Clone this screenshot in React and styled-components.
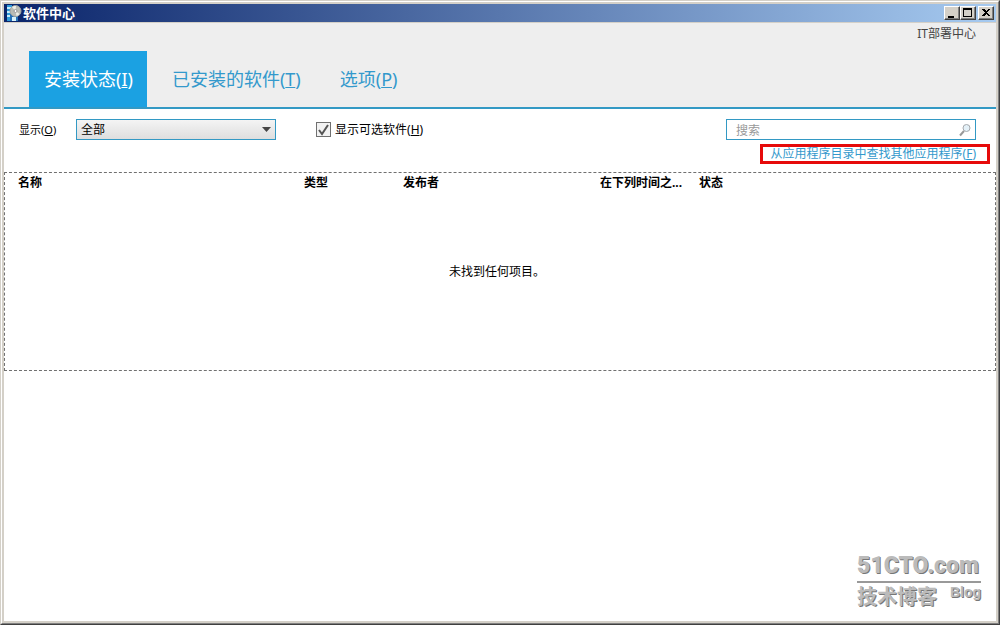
import React from "react"
import styled, { createGlobalStyle, css } from "styled-components"

const GlobalStyle = createGlobalStyle`
  * {
    box-sizing: border-box;
  }

  body {
    margin: 0;
    background: #fff;
    color: #000;
    font: 12px/16px "Noto Sans", "Noto Sans CJK SC", sans-serif;
  }

  button, input, select {
    font: inherit;
    color: inherit;
  }
`

const Frame = styled.div`
  min-height: 100vh;
  display: flex;
  flex-direction: column;
  border: 1px solid #d4d0c8;
  border-right-color: #404040;
  border-bottom-color: #404040;
`

const FrameEdge = styled.div`
  position: relative;
  flex: 1;
  display: flex;
  flex-direction: column;
  padding: 2px;
  border: 1px solid #fff;
  border-right-color: #808080;
  border-bottom-color: #808080;
  background: #fff;
  box-shadow: inset 0 0 0 2px #d4d0c8;
`

const TitleBar = styled.div`
  display: flex;
  align-items: center;
  height: 19px;
  padding: 0 2px;
  gap: 1px;
  border-bottom: 1px solid #d4d0c8;
  background: linear-gradient(to right, #0a246a, #a6caf0);
`

const Title = styled.h1`
  flex: 1;
  margin: 0;
  color: #fff;
  font-size: 13px;
  line-height: 18px;
  font-weight: 700;
`

const WindowButton = styled.button`
  display: flex;
  width: 16px;
  height: 14px;
  padding: 0;
  margin-left: ${props => (props.$spaced ? "1px" : "-1px")};
  border: 1px solid #fff;
  border-right-color: #404040;
  border-bottom-color: #404040;
  background: #d4d0c8;
  box-shadow: inset -1px -1px 0 #808080;
`

const Header = styled.header`
  background: #eee;
  border-bottom: 2px solid #3399c4;
`

const Organization = styled.div`
  padding: 2px 20px 2px;
  height: 28px;
  line-height: 18px;
  text-align: right;
  color: #444;
`

const Tabs = styled.nav`
  display: flex;
  gap: 10px;
  padding-left: 25px;
`

const Tab = styled.button`
  height: 56px;
  padding: 0 14px 0 15px;
  border: 0;
  background: none;
  color: #3399cc;
  font-size: 18px;
  line-height: 24px;

  ${props =>
    props.$active &&
    css`
      background: #1ba1e2;
      color: #fff;
    `}
`

const Toolbar = styled.div`
  display: flex;
  align-items: flex-start;
  height: 63px;
  padding: 10px 6px 0 15px;
`

const FilterLabel = styled.label`
  width: 57px;
  font-size: 11px;
  line-height: 22px;
`

const FilterBox = styled.div`
  display: grid;
  align-items: center;
  width: 200px;
  margin-right: 40px;

  > * {
    grid-area: 1 / 1;
  }

  svg {
    justify-self: end;
    margin-right: 5px;
    pointer-events: none;
  }
`

const Filter = styled.select`
  appearance: none;
  width: 100%;
  height: 21px;
  padding: 1px 20px 0 4px;
  border: 1px solid #3399c4;
  border-radius: 0;
  background: linear-gradient(#f4f4f4, #dedede);
`

const CheckLabel = styled.label`
  display: flex;
  align-items: center;
  gap: 4px;
  height: 21px;
`

const CheckBox = styled.span`
  display: grid;

  > * {
    grid-area: 1 / 1;
  }

  svg {
    pointer-events: none;
    visibility: hidden;
  }

  input:checked + svg {
    visibility: visible;
  }
`

const CheckInput = styled.input`
  appearance: none;
  width: 15px;
  height: 15px;
  margin: 0;
  border: 1px solid #707070;
  background: #f2f2f2;
`

const SearchArea = styled.div`
  display: flex;
  flex-direction: column;
  align-items: flex-end;
  gap: 4px;
  margin-left: auto;
`

const SearchBox = styled.div`
  display: flex;
  align-items: center;
  width: 250px;
  height: 21px;
  margin-right: 14px;
  padding: 0 4px 0 9px;
  border: 1px solid #3399c4;
`

const SearchInput = styled.input`
  flex: 1;
  min-width: 0;
  height: 19px;
  padding: 2px 0 0;
  border: 0;
  outline: 0;
  background: none;

  &::placeholder {
    color: #999;
    opacity: 1;
  }
`

const CatalogLink = styled.a`
  height: 20px;
  padding: 0 11px 0 8px;
  border: 3px solid #e60a0a;
  color: #3399cc;
  line-height: 14px;
  text-decoration: none;
  white-space: nowrap;
`

const List = styled.table`
  width: 100%;
  table-layout: fixed;
  border: 1px dashed #707070;
  border-spacing: 0;
`

const Column = styled.col`
  width: ${props => props.$width || "auto"};
`

const HeadCell = styled.th`
  height: 20px;
  padding: 0 3px 0 ${props => (props.$first ? "13px" : "0")};
  text-align: left;
  white-space: nowrap;
`

const EmptyCell = styled.td`
  height: 177px;
  padding: 0 6px 20px 0;
  text-align: center;
`

const Watermark = styled.div`
  position: absolute;
  right: 17px;
  bottom: 12px;
  width: 124px;
  color: #bbb;
  font-weight: 700;
  text-shadow: 1px 1px 0 #777;
`

const WatermarkName = styled.div`
  border-bottom: 2px solid #999;
  font-family: Roboto, "Liberation Sans", sans-serif;
  font-size: 23px;
  font-weight: 900;
  line-height: 30px;
  white-space: nowrap;
`

const WatermarkRow = styled.div`
  display: flex;
  justify-content: space-between;
  font-size: 20px;
  line-height: 28px;
`

const WatermarkBlog = styled.span`
  font-family: "Liberation Sans", sans-serif;
  font-size: 14px;
  line-height: 18px;
`

const AppIcon = () => (
  <svg width="16" height="16" viewBox="0 0 16 16" aria-hidden="true">
    <path d="M1 0h5v16H1z" fill="#2d9bdc" />
    <path d="M1 2h4v2H1zM1 6h4v2H1zM1 10h4v2H1z" fill="#c5ecfb" />
    <path d="M4 9h8v7H4z" fill="#2672b8" />
    <path d="M6 12h4v4H6z" fill="#d8f1fa" />
    <circle cx="9.5" cy="6" r="5.5" fill="#b9bbb5" stroke="#a0a3a0" />
    <path d="M9.5 6L6 2a5 5 0 0 1 4-1zM9.5 6l4 3a5 5 0 0 1-3 2z" fill="#eeeee6" />
    <circle cx="9.5" cy="6" r="1.5" fill="#fff" stroke="#999" />
  </svg>
)

const MinimizeIcon = () => (
  <svg width="14" height="12" viewBox="0 0 14 12">
    <path d="M3 9h6v2H3z" />
  </svg>
)

const MaximizeIcon = () => (
  <svg width="14" height="12" viewBox="0 0 14 12">
    <path d="M2 1h9v9H2zM3 3v6h7V3z" fillRule="evenodd" />
  </svg>
)

const CloseIcon = () => (
  <svg width="14" height="12" viewBox="0 0 14 12" shapeRendering="crispEdges">
    <path d="M3 2h2l2 2 2-2h2L8 5.500l3 3.500H9L7 7 5 9H3l3-3.500z" />
  </svg>
)

const SearchIcon = () => (
  <svg width="12" height="14" viewBox="0 0 12 14" aria-hidden="true">
    <path d="M1 12.500l4-4.500" stroke="#999" strokeWidth="2" />
    <circle cx="7.500" cy="5" r="3.500" fill="#e4f1f8" stroke="#a5a9ad" />
  </svg>
)

const columns = [
  { name: "名称", width: "299px" },
  { name: "类型", width: "99px" },
  { name: "发布者", width: "197px" },
  { name: "在下列时间之...", width: "99px" },
  { name: "状态" },
]

const tabs = [
  { name: "安装状态", hotkey: "I" },
  { name: "已安装的软件", hotkey: "T" },
  { name: "选项", hotkey: "P" },
]

const Hotkey = ({ children }) => (
  <>
    (<u>{children}</u>)
  </>
)

export default () => {
  const [active, setActive] = React.useState("I")
  const [optional, setOptional] = React.useState(true)

  return (
    <Frame>
      <GlobalStyle />
      <FrameEdge>
        <TitleBar>
          <AppIcon />
          <Title>软件中心</Title>
          <WindowButton aria-label="最小化">
            <MinimizeIcon />
          </WindowButton>
          <WindowButton aria-label="最大化">
            <MaximizeIcon />
          </WindowButton>
          <WindowButton $spaced aria-label="关闭">
            <CloseIcon />
          </WindowButton>
        </TitleBar>
        <Header>
          <Organization>IT部署中心</Organization>
          <Tabs>
            {tabs.map(tab => (
              <Tab
                key={tab.hotkey}
                $active={active === tab.hotkey}
                onClick={() => setActive(tab.hotkey)}
              >
                {tab.name}
                <Hotkey>{tab.hotkey}</Hotkey>
              </Tab>
            ))}
          </Tabs>
        </Header>
        <Toolbar>
          <FilterLabel htmlFor="filter">
            显示<Hotkey>O</Hotkey>
          </FilterLabel>
          <FilterBox>
            <Filter id="filter">
              <option>全部</option>
            </Filter>
            <svg width="9" height="5" viewBox="0 0 9 5" aria-hidden="true">
              <path d="M0 0h9L4.500 5z" fill="#444" />
            </svg>
          </FilterBox>
          <CheckLabel>
            <CheckBox>
              <CheckInput
                type="checkbox"
                checked={optional}
                onChange={e => setOptional(e.target.checked)}
              />
              <svg width="15" height="15" viewBox="0 0 15 15" aria-hidden="true">
                <path d="M3 8l3 4 6-9" fill="none" stroke="#555" strokeWidth="2" />
              </svg>
            </CheckBox>
            <span>
              显示可选软件<Hotkey>H</Hotkey>
            </span>
          </CheckLabel>
          <SearchArea>
            <SearchBox>
              <SearchInput type="text" placeholder="搜索" aria-label="搜索" />
              <SearchIcon />
            </SearchBox>
            <CatalogLink href="#catalog">
              从应用程序目录中查找其他应用程序<Hotkey>F</Hotkey>
            </CatalogLink>
          </SearchArea>
        </Toolbar>
        <List>
          <colgroup>
            {columns.map(column => (
              <Column key={column.name} $width={column.width} />
            ))}
          </colgroup>
          <thead>
            <tr>
              {columns.map((column, i) => (
                <HeadCell key={column.name} $first={i === 0}>
                  {column.name}
                </HeadCell>
              ))}
            </tr>
          </thead>
          <tbody>
            <tr>
              <EmptyCell colSpan={columns.length}>未找到任何项目。</EmptyCell>
            </tr>
          </tbody>
        </List>
        <Watermark>
          <WatermarkName>51CTO.com</WatermarkName>
          <WatermarkRow>
            <span>技术博客</span>
            <WatermarkBlog>Blog</WatermarkBlog>
          </WatermarkRow>
        </Watermark>
      </FrameEdge>
    </Frame>
  )
}
